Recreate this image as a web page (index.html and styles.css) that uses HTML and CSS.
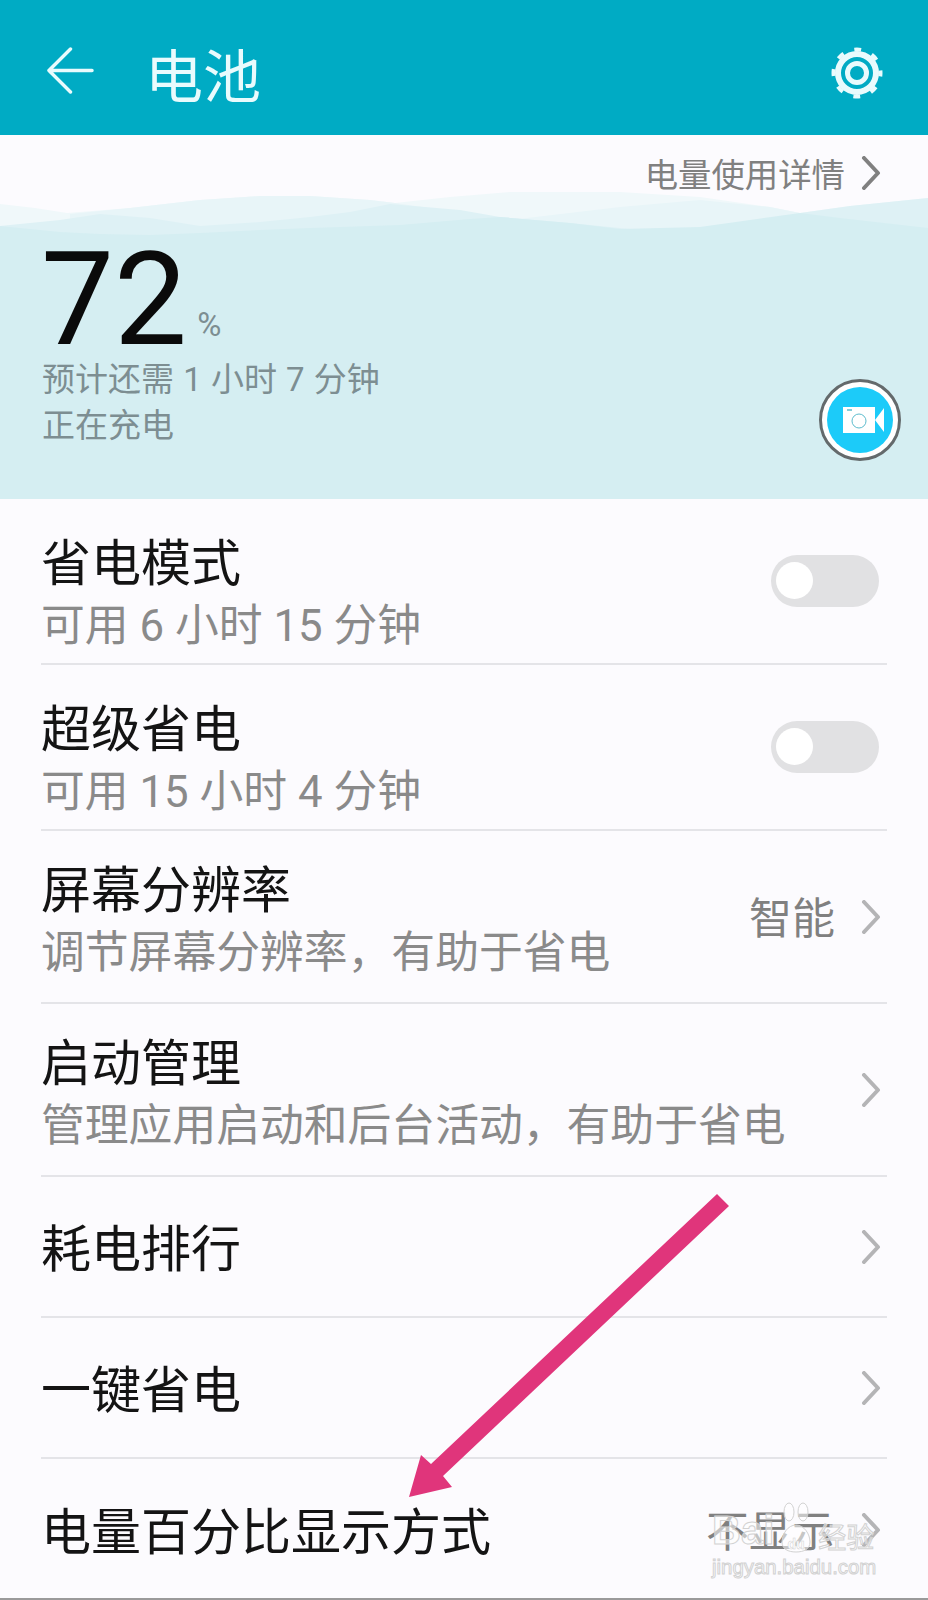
FILE: index.html
```html
<!DOCTYPE html>
<html lang="zh-CN">
<head>
  <meta charset="UTF-8" />
  <meta name="viewport" content="width=device-width, initial-scale=1" />
  <title>电池</title>
  <link rel="stylesheet" href="styles.css">
</head>
<body>
  <div class="screen">
    <header class="topbar">
      <svg class="back-icon" viewBox="0 0 48 48" aria-hidden="true">
        <path d="M46 24H2M24 2L2 24l22 22" />
      </svg>
      <h1>电池</h1>
      <svg class="gear-icon" viewBox="0 0 56 56" aria-hidden="true">
        <circle class="gear-hub" cx="28" cy="28" r="9.5" />
        <circle class="gear-ring" cx="28" cy="28" r="19" />
        <circle class="gear-teeth" cx="28" cy="28" r="23.5" />
      </svg>
    </header>

    <div class="detail-link">
      <span>电量使用详情</span>
      <svg class="chevron" viewBox="0 0 20 34" aria-hidden="true"><path d="M3 2l14 15L3 32" /></svg>
    </div>

    <svg class="wave" viewBox="0 190 928 46" aria-hidden="true">
      <path fill="#f0f8fa" d="M0 204L35 208L67 213L130 208L200 200L260 196L310 196L370 200L395 203L450 197L510 192L620 192L700 197L770 207L800 213L850 206L928 198V236H0Z" />
      <path fill="#e8f5f8" d="M70 214L130 208L200 200L260 196L310 196L370 200L395 203L620 236H70ZM510 220L620 207L700 200L770 207L800 213V236H510Z" />
      <path fill="#def1f5" d="M0 226L60 220L100 214L150 218L200 226L260 222L310 217L350 212L390 204L460 210L500 217L570 223L620 228L700 236H0ZM800 213L850 206L928 198V236H800Z" />
      <path fill="#d5eef2" d="M0 226L60 232L100 234L150 235L200 233L260 230L310 228L400 225L470 219L500 217L570 223L620 229L700 227L750 220L800 213L840 218L928 228V236H0Z" />
    </svg>

    <section class="summary">
      <div class="level"><span class="level-num">72</span><span class="level-unit">%</span></div>
      <p class="estimate">预计还需 1 小时 7 分钟</p>
      <p>正在充电</p>
      <div class="record-btn">
        <svg viewBox="0 0 66 66" aria-hidden="true">
          <circle cx="33" cy="33" r="33" fill="#1ccbf9" />
          <path fill="#fff" d="M16 20h32v26H16zM48 33l9-12v24z" />
          <circle cx="32" cy="34" r="7" fill="none" stroke="#5dbccd" stroke-width="1" />
          <path d="M20 23h5" stroke="#5dbccd" stroke-width="1.5" />
        </svg>
      </div>
    </section>

    <ul class="settings">
      <li class="row">
        <div class="row-text">
          <div class="row-title">省电模式</div>
          <div class="row-sub">可用 6 小时 15 分钟</div>
        </div>
        <span class="switch"><span class="knob"></span></span>
      </li>
      <li class="row">
        <div class="row-text">
          <div class="row-title">超级省电</div>
          <div class="row-sub">可用 15 小时 4 分钟</div>
        </div>
        <span class="switch"><span class="knob"></span></span>
      </li>
      <li class="row row-tall">
        <div class="row-text">
          <div class="row-title">屏幕分辨率</div>
          <div class="row-sub">调节屏幕分辨率，有助于省电</div>
        </div>
        <span class="row-value">智能</span>
        <svg class="chevron chevron-light" viewBox="0 0 20 34" aria-hidden="true"><path d="M3 2l14 15L3 32" /></svg>
      </li>
      <li class="row row-tall">
        <div class="row-text">
          <div class="row-title">启动管理</div>
          <div class="row-sub">管理应用启动和后台活动，有助于省电</div>
        </div>
        <svg class="chevron chevron-light" viewBox="0 0 20 34" aria-hidden="true"><path d="M3 2l14 15L3 32" /></svg>
      </li>
      <li class="row row-plain">
        <div class="row-title">耗电排行</div>
        <svg class="chevron chevron-light" viewBox="0 0 20 34" aria-hidden="true"><path d="M3 2l14 15L3 32" /></svg>
      </li>
      <li class="row row-plain">
        <div class="row-title">一键省电</div>
        <svg class="chevron chevron-light" viewBox="0 0 20 34" aria-hidden="true"><path d="M3 2l14 15L3 32" /></svg>
      </li>
      <li class="row row-plain row-last">
        <div class="row-title">电量百分比显示方式</div>
        <span class="row-value">不显示</span>
        <svg class="chevron chevron-light" viewBox="0 0 20 34" aria-hidden="true"><path d="M3 2l14 15L3 32" /></svg>
      </li>
    </ul>

    <!-- annotation drawn over the screenshot -->
    <svg class="arrow" viewBox="0 0 928 1600" aria-hidden="true">
      <path d="M717 1194L729 1206L443 1476L452 1487L409 1497L421 1455L431 1464Z" />
    </svg>

    <div class="watermark">
      <div class="wm-logo">
        <span>Bai</span>
        <svg class="wm-paw" viewBox="0 0 32 52" aria-hidden="true">
          <ellipse cx="9" cy="11" rx="5" ry="9" />
          <ellipse cx="23" cy="11" rx="5" ry="9" />
          <path d="M16 24c-8 0-14 9-14 17c0 7 6 10 14 10s14-3 14-10c0-8-6-17-14-17z" />
          <text x="16" y="48" text-anchor="middle">du</text>
        </svg>
        <span class="wm-cn">经验</span>
      </div>
      <div class="wm-url">jingyan.baidu.com</div>
    </div>
  </div>
</body>
</html>
```

FILE: styles.css
```css
* { box-sizing: border-box; }
body {
  margin: 0;
  background: #fcfbfe;
  font-family: Roboto, "Noto Sans CJK SC", sans-serif;
}
p, ul, h1 { margin: 0; padding: 0; }
ul { list-style: none; }

.screen {
  position: relative;
  width: 928px;
  height: 1600px;
  overflow: hidden;
  background: #fcfbfe;
  border-bottom: 2px solid #9a9a9a;
}

.topbar {
  height: 135px;
  background: #00abc4;
  display: flex;
  align-items: center;
  padding: 12px 43px 0 47px;
}
.topbar h1 {
  flex: 1;
  margin-left: 51px;
  padding-top: 8px;
  color: #e9fbfd;
  font-size: 58px;
  font-weight: 400;
  line-height: 64px;
}
.back-icon { width: 47px; height: 47px; margin-top: -7px; }
.back-icon path {
  fill: none;
  stroke: #e9fbfd;
  stroke-width: 3.5;
  stroke-linecap: round;
  stroke-linejoin: round;
}
.gear-icon { width: 56px; height: 56px; margin-top: -1px; }
.gear-icon circle { fill: none; stroke: #e9fbfd; }
.gear-hub { stroke-width: 5; }
.gear-ring { stroke-width: 6; }
.gear-teeth { stroke-width: 4; stroke-dasharray: 7 11.46; stroke-dashoffset: 3.5; }

.detail-link {
  height: 55px;
  display: flex;
  justify-content: flex-end;
  align-items: center;
  gap: 16px;
  padding: 20px 47px 0 0;
  color: #808080;
  font-size: 33.4px;
}
.chevron { width: 20px; height: 34px; flex: none; }
.chevron path {
  fill: none;
  stroke: #808080;
  stroke-width: 4;
  stroke-linecap: round;
  stroke-linejoin: round;
}
.chevron-light path { stroke: #b4b4b6; }

.wave { display: block; width: 928px; height: 46px; }

.summary {
  position: relative;
  height: 263px;
  padding: 0 0 0 42px;
  background: #d5eef2;
  color: #7d8e92;
  font-size: 33px;
  line-height: 46px;
}
.level {
  display: flex;
  align-items: flex-start;
  height: 121px;
  padding-top: 3px;
}
.level-num {
  margin-left: -1px;
  color: #0a0a0a;
  font-size: 130px;
  line-height: 122px;
}
.level-unit {
  margin: 69px 0 0 10px;
  font-size: 33px;
  line-height: 33px;
}
.estimate { word-spacing: 1px; }
.record-btn {
  position: absolute;
  right: 27px;
  top: 143px;
  width: 82px;
  height: 82px;
  padding: 5px;
  border: 3px solid #646a6c;
  border-radius: 50%;
  background: #fff;
}
.record-btn svg { display: block; width: 66px; height: 66px; }

.settings { margin: 0 41px; }
.row {
  display: flex;
  align-items: center;
  height: 166px;
  padding: 0 6px 0 0;
  border-bottom: 2px solid #e4e4e8;
}
.row-tall { height: 173px; }
.row-plain { height: 141px; }
.row-last { border-bottom: 0; }
.row-text { flex: 1; padding-top: 28px; }
.row-tall .row-text { padding-top: 11px; }
.row-title {
  color: #141414;
  font-size: 50px;
  line-height: 62px;
}
.row-plain .row-title { flex: 1; padding-top: 6px; }
.row-sub {
  color: #8a8a8a;
  font-size: 43.8px;
  line-height: 63px;
  white-space: nowrap;
}
.row-value {
  margin-right: 26px;
  padding-bottom: 4px;
  color: #808080;
  font-size: 43px;
}
.switch {
  width: 108px;
  height: 52px;
  margin-right: 2px;
  padding: 7px 5px;
  border-radius: 26px;
  background: #e1e1e3;
}
.knob {
  display: block;
  width: 37px;
  height: 37px;
  border-radius: 50%;
  background: #fff;
}

.arrow {
  position: absolute;
  left: 0;
  top: 0;
  width: 928px;
  height: 1600px;
  pointer-events: none;
}
.arrow path { fill: #e0357b; }

.watermark {
  position: absolute;
  left: 712px;
  top: 1500px;
  width: 170px;
  color: rgba(255, 255, 255, 0.55);
  -webkit-text-stroke: 1px #d2d2d2;
  font-family: "Liberation Sans", sans-serif;
}
.wm-logo {
  display: flex;
  align-items: flex-end;
  height: 53px;
  font-size: 40px;
  font-weight: 700;
  line-height: 46px;
  white-space: nowrap;
}
.wm-paw { width: 32px; height: 52px; margin: 0 6px; flex: none; }
.wm-paw ellipse, .wm-paw path {
  fill: rgba(255, 255, 255, 0.55);
  stroke: #d2d2d2;
  stroke-width: 1;
}
.wm-paw text { font-size: 14px; font-weight: 700; fill: #fff; stroke: #d2d2d2; stroke-width: 0.5; }
.wm-cn { font-family: "Noto Sans CJK SC", sans-serif; font-size: 28px; font-weight: 400; line-height: 34px; }
.wm-url { margin-top: 1px; font-size: 20.4px; line-height: 26px; white-space: nowrap; }
```
